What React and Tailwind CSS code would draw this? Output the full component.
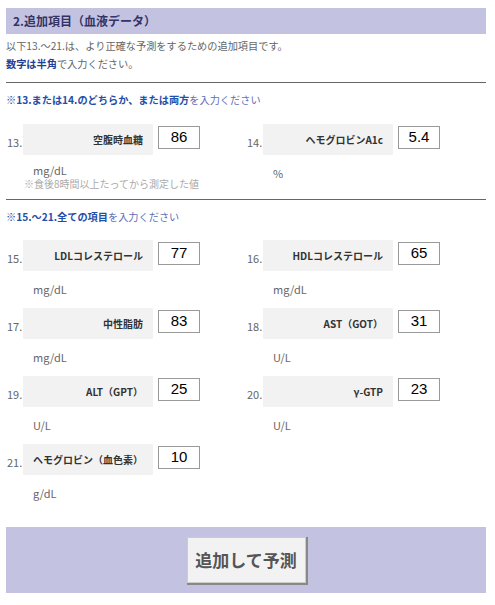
import React from 'react';

const jp = { fontFamily: '"Noto Sans CJK JP", "Noto Sans", sans-serif' };

function Field({ no, label, value, unit, note }) {
  return (
    <div className="flex flex-col">
      <div className="flex items-start">
        <span className="w-[17px] self-end mb-[6px] pl-[1px] text-[11px] leading-[13px] text-[#666]">{no}.</span>
        <div className="w-[130px] h-[31px] bg-[#f2f2f2] flex items-center justify-end pr-[10px] text-[10px] font-bold text-[#333] whitespace-nowrap">
          {label}
        </div>
        <input
          readOnly
          value={value}
          className="ml-[5px] mt-[2px] w-[42px] h-[23px] border border-[#999] bg-white text-center text-[15px] leading-[17px] pb-[3px] text-black outline-none"
          style={{ fontFamily: '"Liberation Sans", Arial, sans-serif' }}
        />
      </div>
      {note ? (
        <div className="mt-[8px] text-[11px] leading-[14px] text-[#666]">
          <div className="pl-[27px]">{unit}</div>
          <div className="pl-[18px] text-[10px] text-[#aaa]">{note}</div>
        </div>
      ) : (
        <div className="mt-[10px] mb-[10px] pl-[27px] text-[11px] leading-[17px] text-[#666]">{unit}</div>
      )}
    </div>
  );
}

export default function App() {
  return (
    <div className="w-[495px] bg-white px-[6px] pt-[8px] pb-[12px]" style={jp}>
      <div className="w-[480px]">
        <div className="h-[26px] bg-[#c3c3e1] flex items-center pl-[7px] text-[12px] font-bold text-[#333366]">
          2.追加項目（血液データ）
        </div>
        <div className="mt-[3px] text-[10.2px] leading-[18px] text-[#666]">
          <p>以下13.～21.は、より正確な予測をするための追加項目です。</p>
          <p>
            <span className="font-bold text-[#1f3f95]">数字は半角</span>で入力ください。
          </p>
        </div>
        <hr className="mt-[9px] border-t border-[#666]" />
        <p className="mt-[8px] text-[10.2px] leading-[18px] text-[#6070b5]">
          <span className="font-bold text-[#1f4fa8]">※13.または14.のどちらか、または両方</span>を入力ください
        </p>
        <div className="mt-[15px] grid grid-cols-2">
          <Field no="13" label="空腹時血糖" value="86" unit="mg/dL" note="※食後8時間以上たってから測定した値" />
          <Field no="14" label="ヘモグロビンA1c" value="5.4" unit="%" />
        </div>
        <hr className="mt-[7px] border-t border-[#666]" />
        <p className="mt-[8px] text-[10.2px] leading-[18px] text-[#6070b5]">
          <span className="font-bold text-[#1f4fa8]">※15.～21.全ての項目</span>を入力ください
        </p>
        <div className="mt-[14px] grid grid-cols-2">
          <Field no="15" label="LDLコレステロール" value="77" unit="mg/dL" />
          <Field no="16" label="HDLコレステロール" value="65" unit="mg/dL" />
          <Field no="17" label="中性脂肪" value="83" unit="mg/dL" />
          <Field no="18" label="AST（GOT）" value="31" unit="U/L" />
          <Field no="19" label="ALT（GPT）" value="25" unit="U/L" />
          <Field no="20" label="γ-GTP" value="23" unit="U/L" />
          <Field no="21" label="ヘモグロビン（血色素）" value="10" unit="g/dL" />
        </div>
        <div className="mt-[15px] h-[66px] bg-[#c3c3e1] flex items-center justify-center">
          <button className="w-[119px] h-[46px] bg-[#f2f2f2] border border-[#ccc] shadow-[1px_1px_0_1px_#888] text-[17px] font-bold text-[#555]">
            追加して予測
          </button>
        </div>
      </div>
    </div>
  );
}
